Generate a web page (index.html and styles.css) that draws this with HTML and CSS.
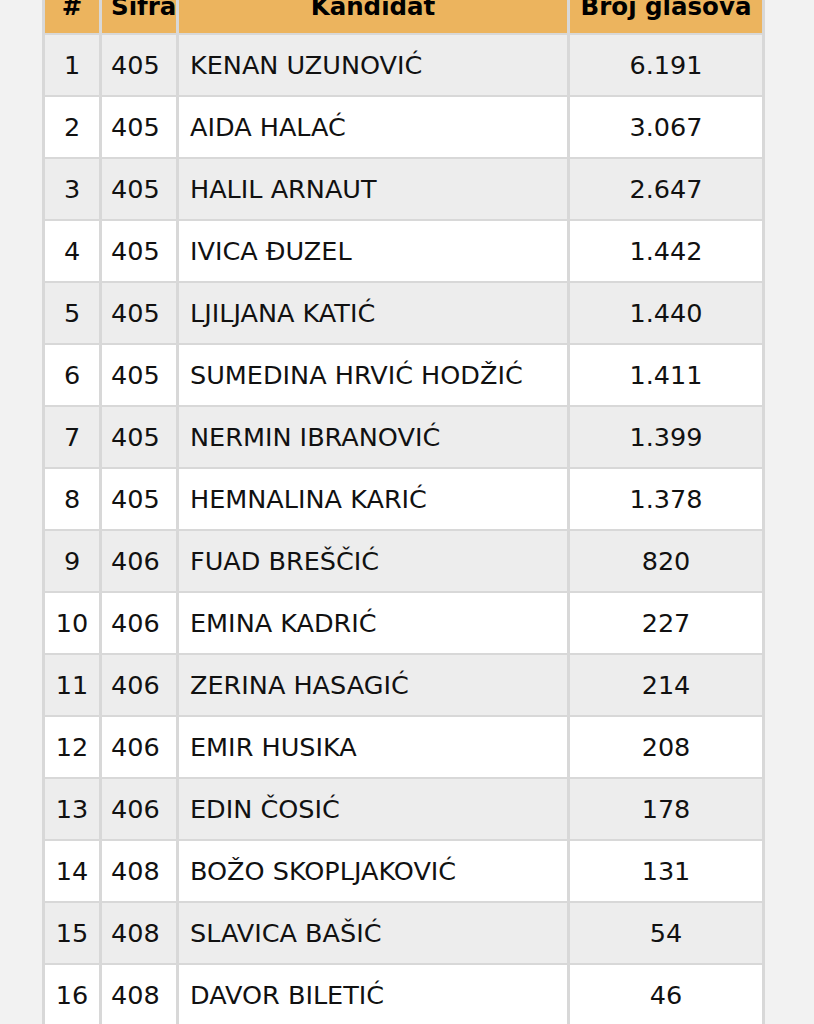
FILE: index.html
```html
<!DOCTYPE html>
<html lang="bs">
<head>
<meta charset="utf-8">
<title>Rezultati</title>
<link rel="stylesheet" href="styles.css">
</head>
<body>
<div class="page">
<table class="results">
<thead>
<tr><th class="c-num">#</th><th class="c-code">Šifra</th><th class="c-name">Kandidat</th><th class="c-votes">Broj glasova</th></tr>
</thead>
<tbody>
<tr><td class="c-num">1</td><td class="c-code">405</td><td class="c-name">KENAN UZUNOVIĆ</td><td class="c-votes">6.191</td></tr>
<tr><td class="c-num">2</td><td class="c-code">405</td><td class="c-name">AIDA HALAĆ</td><td class="c-votes">3.067</td></tr>
<tr><td class="c-num">3</td><td class="c-code">405</td><td class="c-name">HALIL ARNAUT</td><td class="c-votes">2.647</td></tr>
<tr><td class="c-num">4</td><td class="c-code">405</td><td class="c-name">IVICA ĐUZEL</td><td class="c-votes">1.442</td></tr>
<tr><td class="c-num">5</td><td class="c-code">405</td><td class="c-name">LJILJANA KATIĆ</td><td class="c-votes">1.440</td></tr>
<tr><td class="c-num">6</td><td class="c-code">405</td><td class="c-name">SUMEDINA HRVIĆ HODŽIĆ</td><td class="c-votes">1.411</td></tr>
<tr><td class="c-num">7</td><td class="c-code">405</td><td class="c-name">NERMIN IBRANOVIĆ</td><td class="c-votes">1.399</td></tr>
<tr><td class="c-num">8</td><td class="c-code">405</td><td class="c-name">HEMNALINA KARIĆ</td><td class="c-votes">1.378</td></tr>
<tr><td class="c-num">9</td><td class="c-code">406</td><td class="c-name">FUAD BREŠČIĆ</td><td class="c-votes">820</td></tr>
<tr><td class="c-num">10</td><td class="c-code">406</td><td class="c-name">EMINA KADRIĆ</td><td class="c-votes">227</td></tr>
<tr><td class="c-num">11</td><td class="c-code">406</td><td class="c-name">ZERINA HASAGIĆ</td><td class="c-votes">214</td></tr>
<tr><td class="c-num">12</td><td class="c-code">406</td><td class="c-name">EMIR HUSIKA</td><td class="c-votes">208</td></tr>
<tr><td class="c-num">13</td><td class="c-code">406</td><td class="c-name">EDIN ČOSIĆ</td><td class="c-votes">178</td></tr>
<tr><td class="c-num">14</td><td class="c-code">408</td><td class="c-name">BOŽO SKOPLJAKOVIĆ</td><td class="c-votes">131</td></tr>
<tr><td class="c-num">15</td><td class="c-code">408</td><td class="c-name">SLAVICA BAŠIĆ</td><td class="c-votes">54</td></tr>
<tr><td class="c-num">16</td><td class="c-code">408</td><td class="c-name">DAVOR BILETIĆ</td><td class="c-votes">46</td></tr>
</tbody>
</table>
</div>
</body>
</html>
```

FILE: styles.css
```css
html, body {
  margin: 0;
  padding: 0;
  background: #f2f2f2;
  height: 1024px;
  overflow: hidden;
}

.page {
  padding-left: 42px;
}

.results {
  width: 723px;
  margin-top: -22px;
  table-layout: fixed;
  border-collapse: separate;
  border-spacing: 3px 2px;
  background: #d8d8d8;
  font-family: "DejaVu Sans", Verdana, sans-serif;
  color: #111;
}

.results th,
.results td {
  box-sizing: border-box;
  padding: 0 9px;
  vertical-align: middle;
  white-space: nowrap;
}

.results th {
  height: 53px;
  background: #ecb45e;
  font-size: 24.5px;
  line-height: 29px;
  font-weight: bold;
  text-align: center;
  color: #000;
}

.results td {
  height: 60px;
  font-size: 25.5px;
  line-height: 30px;
  background: #ffffff;
}

.results tbody tr:nth-child(odd) td {
  background: #ededed;
}

.c-num { width: 54px; text-align: center; }
.c-code { width: 74px; }
.c-name { width: 388px; }
.c-votes { width: 192px; }

.results td.c-code,
.results td.c-name { text-align: left; }
.results td.c-name { padding-left: 11px; }
.results td.c-num,
.results td.c-votes { text-align: center; }
.results td.c-num { padding: 0 2px; }
```
